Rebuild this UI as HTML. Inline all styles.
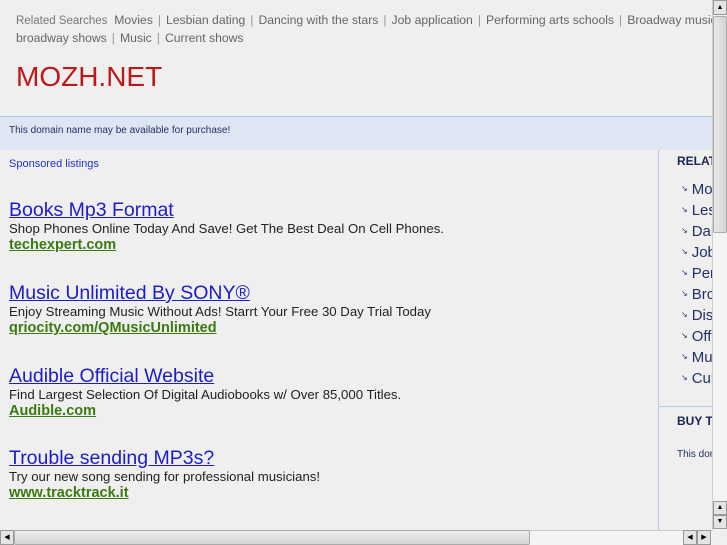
<!DOCTYPE html>
<html><head><meta charset="utf-8"><style>
*{margin:0;padding:0;box-sizing:border-box}
body{width:727px;height:545px;overflow:hidden;background:#efefef;position:relative;font-family:"Liberation Sans",sans-serif}
#wrap{position:absolute;left:0;top:0;width:712px;height:530px;overflow:hidden}
.abs{position:absolute;white-space:nowrap}
.nav{font-size:12.2px;color:#666}
.nav span.s{color:#999;margin:0 5px}
.logo{left:16px;top:61px;font-size:28px;color:#c01818}
.banner{left:0;top:116px;width:712px;height:34px;background:#dfe6f3;border-top:1px solid #b8c8e8}
.vl{left:658px;top:150px;width:1px;height:380px;background:#b8c8e8}
.hl{left:659px;top:406px;width:53px;height:1px;background:#b8c8e8}
.t{font-size:19.5px;color:#1c1cc8;text-decoration:underline;left:9px}
.d{font-size:13.2px;color:#222;left:9px}
.u{font-size:14.5px;color:#3a7a10;font-weight:bold;text-decoration:underline;left:9px}
.r{left:681px;font-size:15px;color:#223066}
.r i{font-style:normal;font-size:8px;margin-right:4px;vertical-align:3px}
</style></head><body>
<div id="wrap">
<div class="abs nav" style="left:16px;top:13px"><span style="font-size:11.5px;color:#777">Related Searches</span>&nbsp; Movies<span class="s">|</span>Lesbian dating<span class="s">|</span>Dancing with the stars<span class="s">|</span>Job application<span class="s">|</span>Performing arts schools<span class="s">|</span>Broadway musicals</div>
<div class="abs nav" style="left:16px;top:31px">broadway shows<span class="s">|</span>Music<span class="s">|</span>Current shows</div>
<div class="abs logo">MOZH.NET</div>
<div class="abs banner"></div>
<div class="abs" style="left:9px;top:125px;font-size:10px;color:#223066">This domain name may be available for purchase!</div>
<div class="abs" style="left:9px;top:158px;font-size:11px;color:#2233cc">Sponsored listings</div>
<div class="abs vl"></div><div class="abs hl"></div>
<div class="abs t" style="top:199px">Books Mp3 Format</div>
<div class="abs d" style="top:221px">Shop Phones Online Today And Save! Get The Best Deal On Cell Phones.</div>
<div class="abs u" style="top:237px">techexpert.com</div>
<div class="abs t" style="top:282px">Music Unlimited By SONY®</div>
<div class="abs d" style="top:304px">Enjoy Streaming Music Without Ads! Starrt Your Free 30 Day Trial Today</div>
<div class="abs u" style="top:320px">qriocity.com/QMusicUnlimited</div>
<div class="abs t" style="top:365px">Audible Official Website</div>
<div class="abs d" style="top:387px">Find Largest Selection Of Digital Audiobooks w/ Over 85,000 Titles.</div>
<div class="abs u" style="top:403px">Audible.com</div>
<div class="abs t" style="top:447px">Trouble sending MP3s?</div>
<div class="abs d" style="top:469px">Try our new song sending for professional musicians!</div>
<div class="abs u" style="top:485px">www.tracktrack.it</div>
<div class="abs" style="left:677px;top:154px;font-size:12px;font-weight:bold;color:#1a2456">RELATED</div>
<div class="abs r" style="top:181px"><i>↘</i>Movies</div>
<div class="abs r" style="top:202px"><i>↘</i>Lesbian</div>
<div class="abs r" style="top:223px"><i>↘</i>Dancing</div>
<div class="abs r" style="top:244px"><i>↘</i>Job</div>
<div class="abs r" style="top:265px"><i>↘</i>Performing</div>
<div class="abs r" style="top:286px"><i>↘</i>Broadway</div>
<div class="abs r" style="top:307px"><i>↘</i>Discount</div>
<div class="abs r" style="top:328px"><i>↘</i>Off</div>
<div class="abs r" style="top:349px"><i>↘</i>Music</div>
<div class="abs r" style="top:370px"><i>↘</i>Current</div>
<div class="abs" style="left:677px;top:414px;font-size:12px;font-weight:bold;color:#1a2456">BUY THIS</div>
<div class="abs" style="left:677px;top:449px;font-size:10px;color:#223066">This domain</div>
</div>
<div class="abs" style="left:712px;top:0;width:15px;height:530px;background:#f4f4f4;border-left:1px solid #ccc"></div>
<div class="abs" style="left:713px;top:0;width:14px;height:15px;background:#e4e4e4;border:1px solid #999;font-size:7px;text-align:center;line-height:13px">▲</div>
<div class="abs" style="left:713px;top:16px;width:14px;height:217px;background:linear-gradient(90deg,#e8e8e8,#d4d4d4);border:1px solid #aaa;border-radius:2px"></div>
<div class="abs" style="left:713px;top:501px;width:14px;height:14px;background:#e4e4e4;border:1px solid #999;font-size:7px;text-align:center;line-height:12px">▲</div>
<div class="abs" style="left:713px;top:515px;width:14px;height:14px;background:#e4e4e4;border:1px solid #999;font-size:7px;text-align:center;line-height:12px">▼</div>
<div class="abs" style="left:0;top:530px;width:712px;height:15px;background:#f4f4f4;border-top:1px solid #ccc"></div>
<div class="abs" style="left:0;top:530px;width:14px;height:15px;background:#e4e4e4;border:1px solid #999;font-size:7px;text-align:center;line-height:13px">◀</div>
<div class="abs" style="left:14px;top:530px;width:516px;height:15px;background:linear-gradient(#ececec,#d6d6d6);border:1px solid #aaa;border-radius:2px"></div>
<div class="abs" style="left:683px;top:530px;width:14px;height:15px;background:#e4e4e4;border:1px solid #999;font-size:7px;text-align:center;line-height:13px">◀</div>
<div class="abs" style="left:697px;top:530px;width:14px;height:15px;background:#e4e4e4;border:1px solid #999;font-size:7px;text-align:center;line-height:13px">▶</div>
<div class="abs" style="left:712px;top:530px;width:15px;height:15px;background:#efefef"></div>
</body></html>
